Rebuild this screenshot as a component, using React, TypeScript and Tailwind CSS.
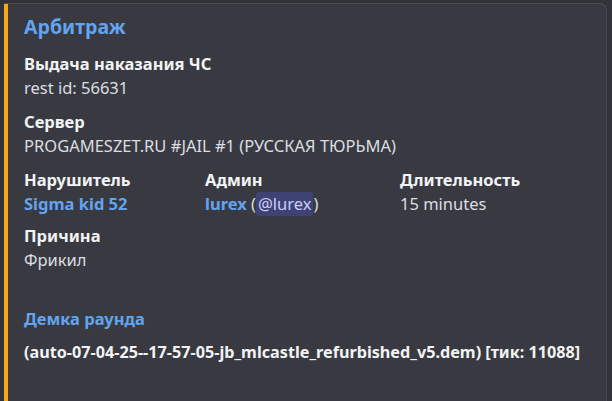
export default function App() {
  return (
    <div
      className="h-[401px] w-[612px] overflow-hidden bg-[#313338] pt-[3px] pl-1 pr-[5px]"
      style={{ fontFamily: '"Noto Sans", "Open Sans", sans-serif' }}
    >
      <div className="flex h-[420px] rounded-tr-lg border-t border-r border-[#4a4b53] bg-[#393a41]">
        <div className="w-1 shrink-0 bg-[#f9a61a]" />
        <div className="flex-1 pl-4 pt-[12px] text-[16.5px] leading-[24px] text-[#dbdee1]">
          <div className="text-[19.5px] font-bold leading-[22px] text-[#62a4f0]">Арбитраж</div>

          <div className="mt-[14px] flex flex-col gap-[10px]">
            <Field name="Выдача наказания ЧС">rest id: 56631</Field>
            <Field name="Сервер">PROGAMESZET.RU #JAIL #1 (РУССКАЯ ТЮРЬМА)</Field>

            <div className="flex">
              <div className="w-[181px]">
                <Field name="Нарушитель">
                  <span className="font-bold text-[#62a4f0]">Sigma kid 52</span>
                </Field>
              </div>
              <div className="w-[195px]">
                <Field name="Админ">
                  <span className="font-bold text-[#62a4f0]">lurex</span>{" "}
                  (<span className="inline-block h-[24px] rounded-[3px] bg-[#3e4374] px-[2px] text-[#c9cdfb]">@lurex</span>)
                </Field>
              </div>
              <div className="flex-1">
                <Field name="Длительность">15 minutes</Field>
              </div>
            </div>

            <div className="-mt-[2px]">
              <Field name="Причина">Фрикил</Field>
            </div>
          </div>

          <div className="mt-[35px] font-bold text-[#62a4f0]">Демка раунда</div>
          <div className="mt-[9px] text-[16.2px] font-bold text-[#f2f3f5]">
            (auto-07-04-25--17-57-05-jb_mlcastle_refurbished_v5.dem) [тик: 11088]
          </div>
        </div>
      </div>
    </div>
  );
}

function Field({ name, children }: { name: string; children: React.ReactNode }) {
  return (
    <div>
      <div className="font-bold text-[#f2f3f5]">{name}</div>
      <div>{children}</div>
    </div>
  );
}
